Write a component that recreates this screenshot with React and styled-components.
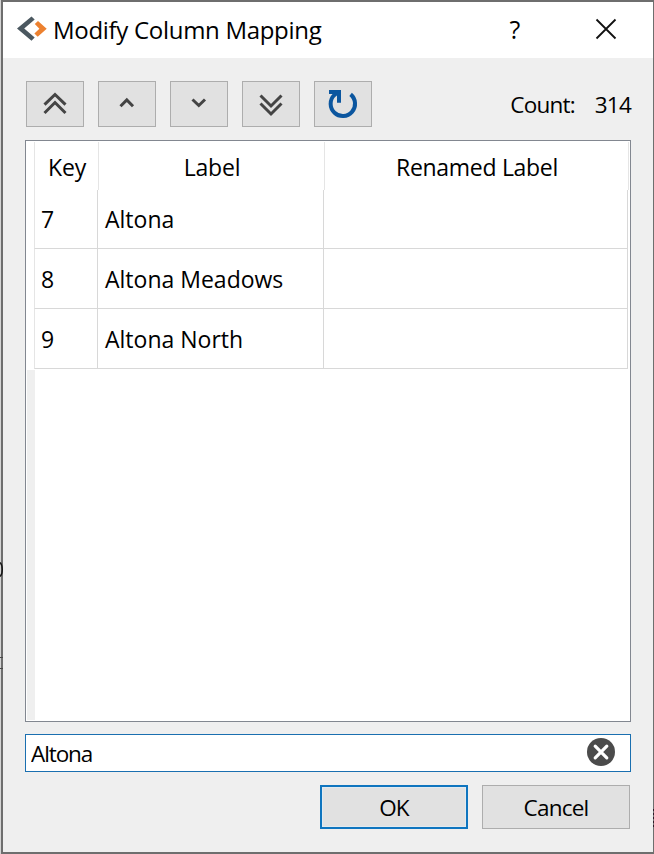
import React, { useState } from "react";
import styled, { createGlobalStyle } from "styled-components";

const GlobalStyle = createGlobalStyle`
  * { box-sizing: border-box; }
  body { margin: 0; background: #d0d0d0; overflow: hidden; }
`;

const Desktop = styled.div`
  position: relative;
  width: 654px;
  height: 854px;
  padding-left: 1px;
  background: #d4d4d4;
  color: #000;
  font-family: "Open Sans", "Noto Sans", sans-serif;
  font-size: 23px;
`;

const Dialog = styled.div`
  width: 653px;
  height: 854px;
  display: flex;
  flex-direction: column;
  background: #efefef;
  border: 2px solid #6e6e6e;
  border-right-width: 1px;
`;

const TitleBar = styled.header`
  height: 56px;
  flex: none;
  display: flex;
  align-items: center;
  background: #fff;
  padding: 0 36px 2px 14px;
`;

const Logo = styled.svg`
  width: 30px;
  height: 26px;
  flex: none;
`;

const Text = styled.span`
  display: block;
  white-space: pre;
  line-height: 30px;
  font-size: ${(p) => p.$size || 23}px;
  letter-spacing: ${(p) => p.$track || 0}px;
`;

const Title = styled(Text)`
  margin-left: 6px;
  padding-top: 1px;
  flex: 1;
`;

const TitleButton = styled.button`
  border: 0;
  padding: 0;
  background: none;
  font: inherit;
  color: inherit;
  display: flex;
  justify-content: center;
  width: 22px;
  margin-left: ${(p) => p.$gap || 0}px;
`;

const Content = styled.main`
  flex: 1;
  display: flex;
  flex-direction: column;
  padding: 23px 22px 0 22px;
`;

const Toolbar = styled.div`
  display: flex;
  align-items: center;
  gap: 14px;
  padding-left: 1px;
  height: 46px;
  flex: none;
`;

const ToolButton = styled.button`
  width: 58px;
  height: 46px;
  padding: 0;
  background: #e1e1e1;
  border: 1px solid #adadad;
  svg { display: block; }
`;

const Count = styled.div`
  margin-left: auto;
  padding-top: 2px;
  display: flex;
  gap: 20px;
`;

const Table = styled.section`
  margin-top: 13px;
  height: 582px;
  flex: none;
  border: 1px solid #828790;
  background: #fff;
  display: flex;
  flex-direction: column;
  padding: 1px;
`;

const Header = styled.div`
  display: grid;
  grid-template-columns: 65px 226px 304px;
  height: 48px;
  margin-left: 7px;
  flex: none;
`;

const HeaderCell = styled.div`
  border-right: 1px solid #e5e5e5;
  display: flex;
  justify-content: center;
  padding-top: 10px;
  padding-left: 1px;
  &:first-child { border-left: 1px solid #e5e5e5; }
`;

const Row = styled.div`
  display: grid;
  grid-template-columns: 64px 226px 304px;
  height: ${(p) => (p.$first ? 59 : 60)}px;
  margin-left: 7px;
  flex: none;
`;

const Cell = styled.div`
  border-right: 1px solid #d8d8d8;
  border-bottom: 1px solid #d8d8d8;
  display: flex;
  align-items: flex-end;
  padding: 0 0 14px 7px;
  &:first-child { border-left: 1px solid #e5e5e5; padding-left: 6px; }
`;

const Gutter = styled.div`
  width: 8px;
  flex: 1;
  margin-top: 1px;
  background: #efefef;
`;

const SearchField = styled.label`
  margin-top: 12px;
  height: 38px;
  flex: none;
  display: flex;
  align-items: center;
  border: 1px solid #1a6fb0;
  background: #fff;
  padding: 0 15px 2px 5px;
`;

const SearchInput = styled.input`
  flex: 1;
  min-width: 0;
  height: 34px;
  padding: 2px 0 0;
  border: 0;
  outline: 0;
  background: none;
  color: #000;
  font-family: "Open Sans", "Noto Sans", sans-serif;
  font-size: 22.5px;
  letter-spacing: -1.1px;
`;

const ClearButton = styled.button`
  width: 28px;
  height: 28px;
  padding: 0;
  border: 0;
  background: none;
  svg { display: block; }
`;

const Actions = styled.footer`
  margin-top: 13px;
  padding-right: 1px;
  display: flex;
  justify-content: flex-end;
  gap: 14px;
`;

const ActionButton = styled.button`
  width: 148px;
  height: 44px;
  padding: 2px 0 0;
  display: flex;
  align-items: center;
  justify-content: center;
  font: inherit;
  color: inherit;
  background: #e1e1e1;
  border: ${(p) => (p.$primary ? "2px solid #0f75bf" : "1px solid #adadad")};
  box-shadow: ${(p) => (p.$primary ? "inset 0 0 0 1px #e1eaf0" : "none")};
`;

/* Slivers of the window behind that stay visible past the dialog's edges. */
const Behind = styled.svg`
  position: absolute;
  left: ${(p) => p.$x}px;
  top: ${(p) => p.$y}px;
  pointer-events: none;
`;

function ToolIcon({ d }) {
  return (
    <svg width="56" height="44" fill="none" stroke="#444" strokeWidth="3">
      <path d={d} />
    </svg>
  );
}

const moves = [
  ["Move to top", "M17.5 22.7 28 12.5 38.5 22.7M17.5 31 28 20.5 38.5 31"],
  ["Move up", "M21.5 24.3 27.8 18 34 24.3"],
  ["Move down", "M21.5 17.5 27.8 23.5 34 17.5"],
  ["Move to bottom", "M17.5 13.5 28 24 38.5 13.5M17.5 21.5 28 32 38.5 21.5"],
];

const rows = [
  ["7", "Altona"],
  ["8", "Altona Meadows"],
  ["9", "Altona North"],
];

export default function App() {
  const [query, setQuery] = useState("Altona");
  return (
    <Desktop>
      <GlobalStyle />
      <Dialog>
        <TitleBar>
          <Logo viewBox="0 0 30 26">
            <path d="M14.5 0.5 17.7 3.5 7.2 12.6 17.7 21.4 14.5 24.8 0 12.5Z" fill="#4b5860" />
            <path d="M17.8 8 21 5 29.7 12.7 20.7 20.7 17.4 17.5 22.4 12.7Z" fill="#ec8130" />
          </Logo>
          <Title $size={24} $track={-0.3}>Modify Column Mapping</Title>
          <TitleButton aria-label="Help"><Text $size={25}>?</Text></TitleButton>
          <TitleButton aria-label="Close" $gap={69}>
            <svg width="22" height="22" fill="none" stroke="#111" strokeWidth="1.8">
              <path d="M1.5 1.5 20.5 20.5M20.5 1.5 1.5 20.5" />
            </svg>
          </TitleButton>
        </TitleBar>
        <Content>
          <Toolbar>
            {moves.map(([name, d]) => (
              <ToolButton key={name} aria-label={name}><ToolIcon d={d} /></ToolButton>
            ))}
            <ToolButton aria-label="Reset">
              <svg width="56" height="44" fill="none" stroke="#0b569f" strokeWidth="4">
                <path d="M35.6 12.4A12.2 12.2 0 1 1 19.2 13.2L22.5 10.5" />
                <path d="M14 10H24V20.8" />
              </svg>
            </ToolButton>
            <Count>
              <Text $size={22.5} $track={-0.8}>Count:</Text>
              <Text $size={22.5} $track={-0.8}>314</Text>
            </Count>
          </Toolbar>
          <Table>
            <Header>
              <HeaderCell><Text $track={-0.2}>Key</Text></HeaderCell>
              <HeaderCell><Text $track={-0.2}>Label</Text></HeaderCell>
              <HeaderCell><Text $track={-0.3}>Renamed Label</Text></HeaderCell>
            </Header>
            {rows.map(([key, label], i) => (
              <Row key={key} $first={i === 0}>
                <Cell><Text>{key}</Text></Cell>
                <Cell><Text>{label}</Text></Cell>
                <Cell />
              </Row>
            ))}
            <Gutter />
          </Table>
          <SearchField>
            <SearchInput value={query} onChange={(e) => setQuery(e.target.value)} />
            <ClearButton aria-label="Clear" onClick={() => setQuery("")}>
              <svg width="28" height="28">
                <circle cx="14" cy="14" r="14" fill="#4b4b4b" />
                <path d="M8.2 8.2 19.8 19.8M19.8 8.2 8.2 19.8" stroke="#fff" strokeWidth="3.2" strokeLinecap="round" />
              </svg>
            </ClearButton>
          </SearchField>
          <Actions>
            <ActionButton $primary><Text $size={22.5} $track={-1}>OK</Text></ActionButton>
            <ActionButton><Text $size={22.5} $track={-0.8}>Cancel</Text></ActionButton>
          </Actions>
        </Content>
      </Dialog>
      <Behind $x={0} $y={560} width="3" height="112" fill="none">
        <path d="M0 2.5C3 5 3 14 0 16.5" stroke="#151515" strokeWidth="1.5" />
        <path d="M0 97.5H3M0 108.5H3" stroke="#484848" />
      </Behind>
      <Behind $x={653} $y={808} width="1" height="20" fill="none">
        <path d="M.5 1V20" stroke="#2e1a28" strokeDasharray="2 2" />
      </Behind>
    </Desktop>
  );
}
